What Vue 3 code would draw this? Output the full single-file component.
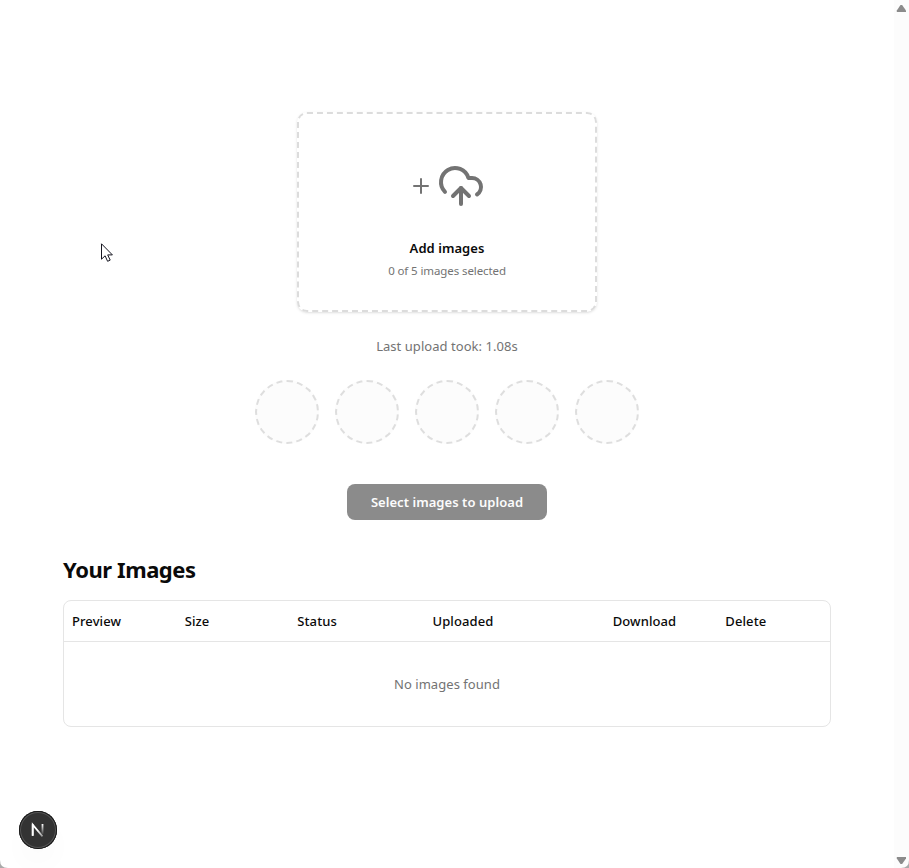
<script setup>
const slots = 5
const columns = ['Preview', 'Size', 'Status', 'Uploaded', 'Download', 'Delete']
</script>

<template>
  <div class="window">
    <main class="page">
      <section class="uploader">
        <div class="dropzone">
          <div class="icons">
            <svg width="24" height="24" viewBox="0 0 24 24" class="icon"><path d="M5 12h14M12 5v14" /></svg>
            <svg width="48" height="48" viewBox="0 0 24 24" class="icon">
              <path d="M12 13v8" />
              <path d="M4 14.899A7 7 0 1 1 15.71 8h1.79a4.5 4.5 0 0 1 2.5 8.242" />
              <path d="m8 17 4-4 4 4" />
            </svg>
          </div>
          <div class="title"><span>Add images</span></div>
          <div class="count"><span>0 of 5 images selected</span></div>
        </div>
        <p class="timing"><span>Last upload took: 1.08s</span></p>
        <div class="slots">
          <div v-for="n in slots" :key="n" class="slot"></div>
        </div>
        <button class="submit" disabled><span>Select images to upload</span></button>
      </section>
      <section class="gallery">
        <h2><span>Your Images</span></h2>
        <div class="table">
          <div class="head">
            <div v-for="c in columns" :key="c" class="cell"><span>{{ c }}</span></div>
          </div>
          <div class="empty"><span>No images found</span></div>
        </div>
      </section>
    </main>
    <aside class="scrollbar">
      <svg width="15" height="16" viewBox="0 0 15 16"><path d="M6.5 5h1.6l3.9 5.6V12H2.8v-1.4z" fill="#8b8b8b" /></svg>
      <svg width="15" height="16" viewBox="0 0 15 16"><path d="M2.8 5H12v1.4L8.1 12H6.5L2.8 6.4z" fill="#8b8b8b" /></svg>
    </aside>
    <div class="badge">
      <svg width="38" height="38" viewBox="0 0 38 38">
        <defs>
          <linearGradient id="stem" x1="0" y1="13" x2="0" y2="24" gradientUnits="userSpaceOnUse">
            <stop offset="0" stop-color="#fff" /><stop offset="1" stop-color="#fff" stop-opacity="0" />
          </linearGradient>
          <linearGradient id="diagonal" x1="19" y1="19" x2="25" y2="27" gradientUnits="userSpaceOnUse">
            <stop offset="0" stop-color="#fff" /><stop offset="1" stop-color="#fff" stop-opacity=".3" />
          </linearGradient>
        </defs>
        <path d="M13.7 24.8V13.7L23.5 25.4" fill="none" stroke="url(#diagonal)" stroke-width="1.7" />
        <path d="M13.7 24.8V13.2" stroke="#fff" stroke-width="1.8" />
        <path d="M23.5 13v10" stroke="url(#stem)" stroke-width="1.8" />
      </svg>
    </div>
    <svg class="pointer" width="14" height="21" viewBox="0 0 14 21">
      <path d="M1.5 1.8v15.4l3.6-3.4 2.5 5.5 2.6-1.2-2.5-5.2h4.7z" fill="#fff" stroke="#151520" stroke-width="1" />
    </svg>
    <svg class="corner left" width="8" height="8" viewBox="0 0 8 8"><path d="M0 0Q0 8 8 8H0z" fill="#aaa" /></svg>
    <svg class="corner right" width="8" height="8" viewBox="0 0 8 8"><path d="M8 0Q8 8 0 8H8z" fill="#aaa" /></svg>
  </div>
</template>

<style>
body { margin: 0; overflow: hidden; background: #fff; }
</style>

<style scoped>
.window {
  position: relative;
  display: flex;
  width: 909px;
  height: 868px;
  overflow: hidden;
  box-sizing: border-box;
  background: #fff;
  color: #0a0a0a;
  font-family: "Segoe UI", "Noto Sans", "Open Sans", sans-serif;
}
.window * { box-sizing: border-box; }
span { white-space: nowrap; }
.page { flex: 1; padding: 112px 63px 0; }
.uploader { display: flex; flex-direction: column; align-items: center; }
.dropzone {
  width: 300px;
  height: 200px;
  border: 2px dashed #dcdcdc;
  border-radius: 10px;
  box-shadow: 0 1px 3px rgba(0, 0, 0, .1), 0 1px 2px -1px rgba(0, 0, 0, .1);
  display: flex;
  flex-direction: column;
  align-items: center;
  padding-top: 48px;
}
.icons { display: flex; align-items: center; gap: 4px; height: 48px; margin-bottom: 28px; }
.icon { fill: none; stroke: #737373; stroke-width: 2; stroke-linecap: round; stroke-linejoin: round; display: block; }
.title { font-size: 13px; line-height: 20px; font-weight: 600; letter-spacing: .05px; }
.count { margin-top: 5px; font-size: 11.5px; line-height: 16px; color: #737373; letter-spacing: -.1px; }
.timing { margin: 24px 0; font-size: 13px; line-height: 20px; color: #737373; letter-spacing: .05px; }
.slots { display: flex; gap: 16px; }
.slot { width: 64px; height: 64px; border: 2px dashed #dedede; border-radius: 50%; background: #fcfcfc; }
.submit {
  margin-top: 40px;
  width: 200px;
  height: 36px;
  padding: 0;
  border: 0;
  border-radius: 8px;
  background: #8b8b8b;
  color: #fcfcfc;
  font: 600 13px/20px "Segoe UI", "Noto Sans", sans-serif;
  letter-spacing: .05px;
}
.gallery { margin-top: 33px; }
h2 { margin: 0 0 15px; font-size: 22px; line-height: 32px; font-weight: 700; letter-spacing: -.45px; }
.table { height: 127px; border: 1px solid #e5e5e5; border-radius: 8px; }
.head {
  height: 41px;
  display: grid;
  grid-template-columns: 10fr 10fr 12fr 16fr 10fr 10fr;
  align-items: center;
  border-bottom: 1px solid #e5e5e5;
}
.cell { padding-left: 8px; font-size: 13px; line-height: 20px; font-weight: 550; letter-spacing: .1px; }
.empty { height: 84px; display: flex; align-items: center; justify-content: center; font-size: 13px; letter-spacing: .05px; color: #737373; }
.scrollbar { width: 15px; background: #fcfcfc; display: flex; flex-direction: column; justify-content: space-between; }
.scrollbar svg { display: block; }
.badge {
  position: absolute;
  left: 19px;
  top: 811px;
  width: 38px;
  height: 38px;
  border-radius: 50%;
  background: #333;
  box-shadow: inset 0 0 0 1px #171717, inset 0 0 0 2px #555, 0 16px 32px -8px rgba(0, 0, 0, .06);
}
.badge svg { display: block; }
.pointer { position: absolute; left: 100px; top: 242px; }
.corner { position: absolute; bottom: 0; }
.left { left: 0; }
.right { right: 0; }
</style>
